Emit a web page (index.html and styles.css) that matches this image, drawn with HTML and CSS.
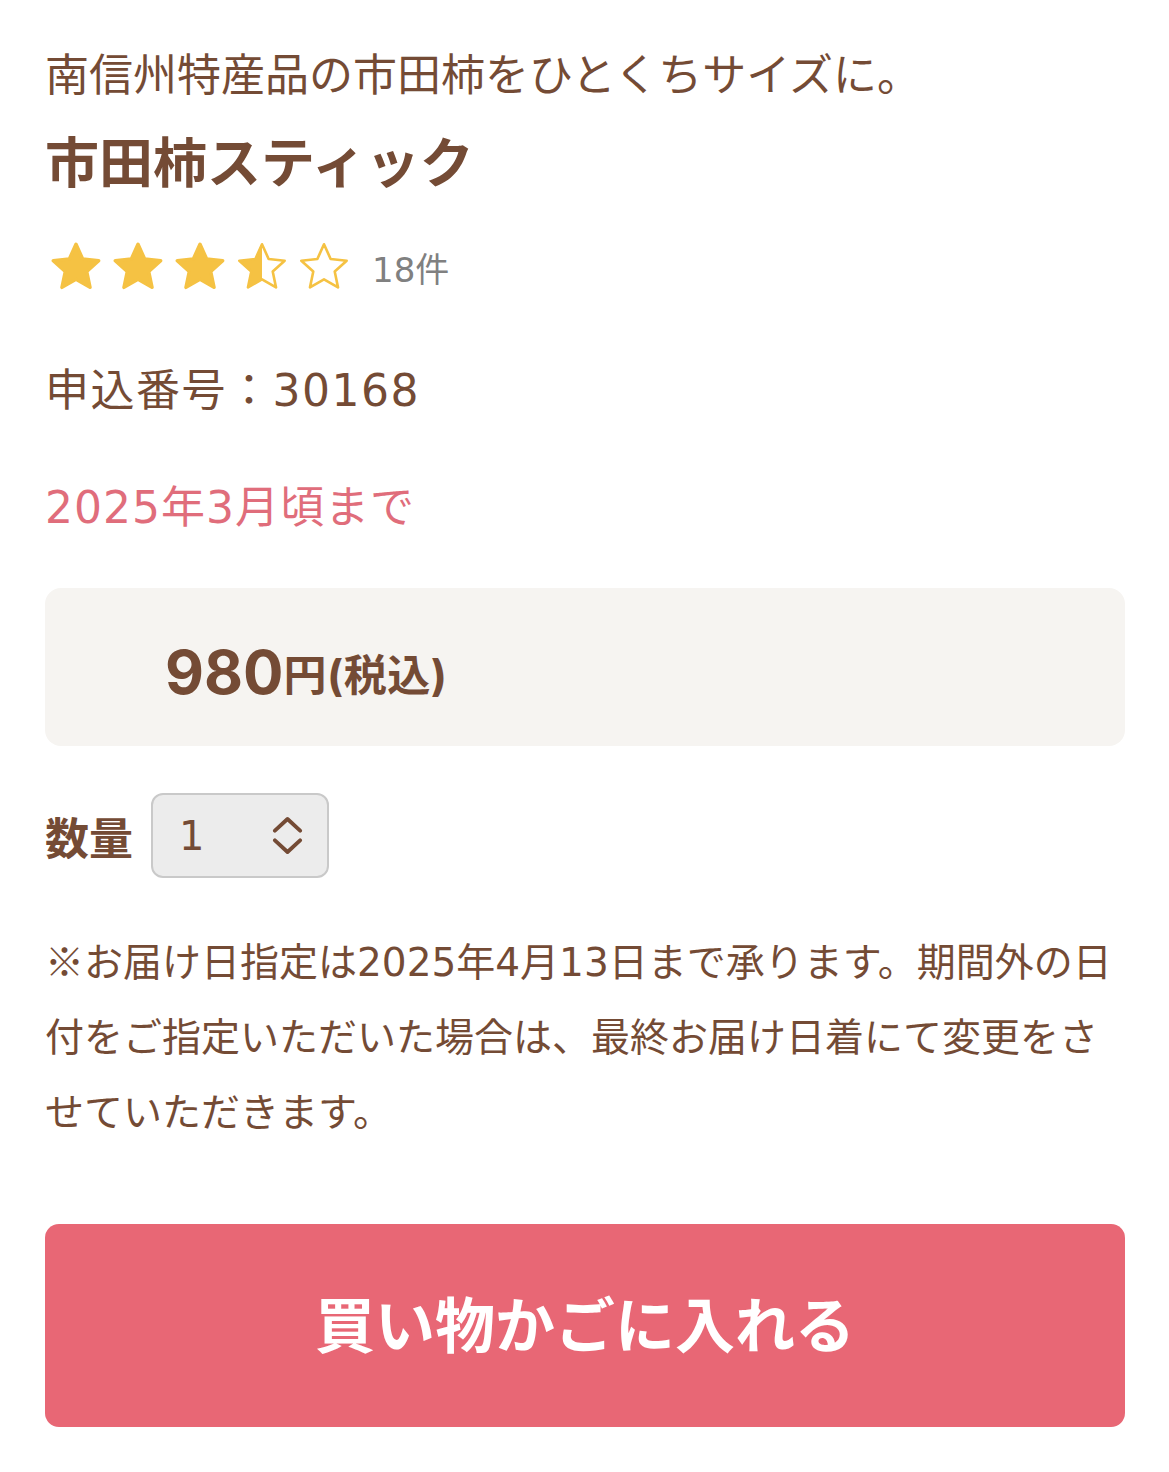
FILE: index.html
```html
<!DOCTYPE html>
<html lang="ja">

<head>
    <meta charset="UTF-8">
    <meta name="viewport" content="width=device-width, initial-scale=1.0">
    <title>市田柿スティック</title>
    <link rel="stylesheet" href="styles.css">
</head>

<body>
    <svg width="0" height="0" class="defs">
        <defs>
            <linearGradient id="halfFill" x1="0" x2="1" y1="0" y2="0">
                <stop offset="50%" stop-color="#f5c243"></stop>
                <stop offset="50%" stop-color="#ffffff"></stop>
            </linearGradient>
            <path id="starShape" d="M12 0.5 L15.06 7.29 L22.46 8.10 L16.95 13.11 L18.47 20.40 L12 16.7 L5.53 20.40 L7.05 13.11 L1.54 8.10 L8.94 7.29 Z"></path>
        </defs>
    </svg>

    <div class="product">
        <p class="lead">南信州特産品の市田柿をひとくちサイズに。</p>
        <h1 class="title">市田柿スティック</h1>

        <div class="rating">
            <div class="stars">
                <svg class="star full" viewBox="0 0 24 22"><use href="#starShape"></use></svg>
                <svg class="star full" viewBox="0 0 24 22"><use href="#starShape"></use></svg>
                <svg class="star full" viewBox="0 0 24 22"><use href="#starShape"></use></svg>
                <svg class="star half" viewBox="0 0 24 22"><use href="#starShape"></use></svg>
                <svg class="star empty" viewBox="0 0 24 22"><use href="#starShape"></use></svg>
            </div>
            <span class="review-count">18件</span>
        </div>

        <p class="code">申込番号：30168</p>
        <p class="period">2025年3月頃まで</p>

        <div class="price-box">
            <span class="price-num">980</span><span class="price-unit">円(税込)</span>
        </div>

        <div class="qty-row">
            <label class="qty-label">数量</label>
            <div class="qty-select">
                <span class="qty-value">1</span>
                <svg class="qty-arrow" viewBox="0 0 32 38">
                    <path d="M3 14 L16 2 L29 14 M3 24 L16 36 L29 24"></path>
                </svg>
            </div>
        </div>

        <p class="notice"><span class="cjk">※</span>お届け日指定は2025年4月13日まで承ります。期間外の日付をご指定いただいた場合は、最終お届け日着にて変更をさせていただきます。</p>

        <button class="cart-btn">買い物かごに入れる</button>
    </div>
</body>

</html>
```

FILE: styles.css
```css
body {
    margin: 0;
    background-color: #fff;
    font-family: "DejaVu Sans", "Noto Sans CJK JP", sans-serif;
    color: #744b35;
}

.defs {
    position: absolute;
}

/* ※ は和文フォントで */
.cjk {
    font-family: "Noto Sans CJK JP", sans-serif;
    line-height: 1;
}

.product {
    padding: 46px 44px 40px 45px;
}

p {
    margin: 0;
}

.lead {
    font-size: 44px;
    line-height: 60px;
}

/* 商品名 */
.title {
    margin: 24px 0 0;
    font-size: 54px;
    line-height: 70px;
    font-weight: bold;
}

.rating {
    margin-top: 42px;
    height: 50px;
    display: flex;
    align-items: center;
}

.stars {
    display: flex;
    gap: 10px;
    margin-left: 5px;
}

.star {
    width: 52px;
    height: 48px;
    overflow: visible;
    stroke: #f5c243;
    stroke-linejoin: round;
}

.star.full {
    fill: #f5c243;
    stroke-width: 1.6;
}

.star.half {
    fill: url(#halfFill);
    stroke-width: 1.2;
}

.star.empty {
    fill: #fff;
    stroke-width: 1.2;
}

.review-count {
    margin-left: 22px;
    font-size: 34px;
    color: #808080;
}

.code {
    margin-top: 69px;
    font-size: 44px;
    line-height: 60px;
    letter-spacing: 1.5px;
}

.period {
    margin-top: 57px;
    font-size: 44px;
    line-height: 60px;
    letter-spacing: 1px;
    color: #e06d7b;
}

/* 価格 */
.price-box {
    margin-top: 50px;
    height: 158px;
    box-sizing: border-box;
    padding: 10px 0 0 120px;
    background-color: #f6f4f1;
    border-radius: 16px;
    display: flex;
    align-items: center;
    font-family: "Inter", "Noto Sans CJK JP", sans-serif;
    font-weight: bold;
}

.price-num {
    font-size: 60px;
}

.price-unit {
    font-size: 43px;
    letter-spacing: 0.5px;
}

/* 数量 */
.qty-row {
    margin-top: 47px;
    display: flex;
    align-items: center;
    gap: 18px;
}

.qty-label {
    font-size: 44px;
    font-weight: bold;
}

.qty-select {
    width: 178px;
    height: 85px;
    box-sizing: border-box;
    padding: 0 24px 0 26px;
    border: 2px solid #c9c9c9;
    border-radius: 12px;
    background-color: #ececec;
    display: flex;
    align-items: center;
    justify-content: space-between;
}

.qty-value {
    font-size: 40px;
}

.qty-arrow {
    width: 31px;
    height: 37px;
    fill: none;
    stroke: #744b35;
    stroke-width: 4;
    stroke-linecap: round;
    stroke-linejoin: round;
}

.notice {
    margin-top: 47px;
    font-size: 39px;
    line-height: 75px;
}

/* カートボタン */
.cart-btn {
    display: block;
    width: 100%;
    height: 203px;
    margin-top: 74px;
    padding: 0 0 8px;
    border: none;
    border-radius: 14px;
    background-color: #e86775;
    color: #fff;
    font-family: "Noto Sans CJK JP", sans-serif;
    font-size: 60px;
    font-weight: bold;
    cursor: pointer;
}
```
